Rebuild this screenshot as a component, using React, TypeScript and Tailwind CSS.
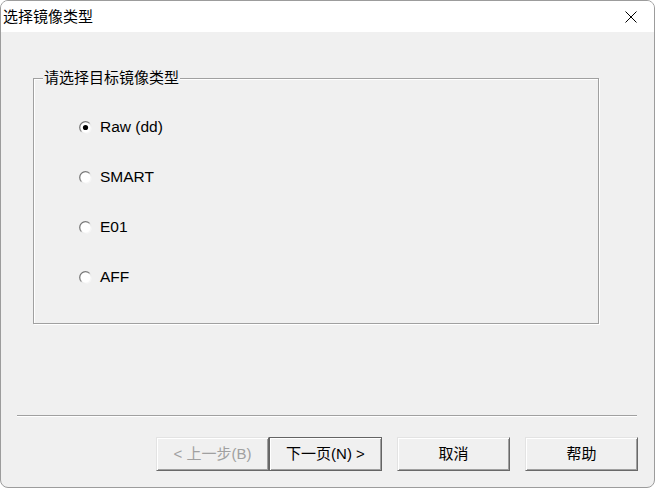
import React from "react";

const FONT = { fontFamily: '"Liberation Sans", "Noto Sans CJK SC", sans-serif' };

function Radio({ checked, id }: { checked?: boolean; id: string }) {
  return (
    <svg width="13" height="13" viewBox="0 0 13 13" className="shrink-0">
      <defs>
        <linearGradient id={id} x1="0" y1="0" x2="1" y2="1">
          <stop offset="0" stopColor="#6a6a6a" />
          <stop offset="0.45" stopColor="#8a8a8a" />
          <stop offset="0.55" stopColor="#e6e6e6" />
          <stop offset="1" stopColor="#ffffff" />
        </linearGradient>
      </defs>
      <circle cx="6.5" cy="6.5" r="5.8" fill="#ffffff" stroke={`url(#${id})`} strokeWidth="1.3" />
      {checked && <circle cx="6.5" cy="6.5" r="2.6" fill="#000000" />}
    </svg>
  );
}

function Btn({
  children,
  variant = "normal",
  className = "",
}: {
  children: React.ReactNode;
  variant?: "normal" | "default" | "disabled";
  className?: string;
}) {
  const base =
    "h-[34px] w-[113px] flex items-center justify-center text-[15px] leading-[20px] bg-[#f0f0f0] shrink-0";
  const v =
    variant === "default"
      ? "border border-[#646464] shadow-[inset_1px_1px_0_#ffffff,inset_-1px_-1px_0_#a0a0a0] text-black"
      : variant === "disabled"
      ? "border border-t-[#e3e3e3] border-l-[#e3e3e3] border-r-[#696969] border-b-[#696969] shadow-[inset_1px_1px_0_#ffffff,inset_-1px_-1px_0_#a0a0a0] text-[#a0a0a0]"
      : "border border-t-[#e3e3e3] border-l-[#e3e3e3] border-r-[#696969] border-b-[#696969] shadow-[inset_1px_1px_0_#ffffff,inset_-1px_-1px_0_#a0a0a0] text-black";
  return <div className={`${base} ${v} ${className}`}>{children}</div>;
}

export default function App() {
  const options = ["Raw (dd)", "SMART", "E01", "AFF"];
  return (
    <div className="w-[655px] h-[488px] bg-white" style={FONT}>
      <div className="w-[655px] h-[488px] rounded-[8px] border border-[#9c9c9c] bg-[#f0f0f0] overflow-hidden flex flex-col">
        {/* title bar */}
        <div className="h-[31px] bg-white flex items-center justify-between shrink-0">
          <span className="ml-[2px] text-[15px] leading-[20px] text-black">选择镜像类型</span>
          <svg width="12" height="12" viewBox="0 0 12 12" className="mr-[17px]">
            <path d="M0.5 0.5 L11.5 11.5 M11.5 0.5 L0.5 11.5" stroke="#000" strokeWidth="1" />
          </svg>
        </div>

        {/* group box */}
        <fieldset className="ml-[32px] mt-[36px] w-[566px] h-[256px] border border-[#a0a0a0] shadow-[inset_1px_1px_0_#ffffff,1px_1px_0_#ffffff] shrink-0">
          <legend className="ml-[9px] px-[1px] text-[15px] leading-[20px] text-black bg-[#f0f0f0]">
            请选择目标镜像类型
          </legend>
          <div className="pl-[45px] pt-[29px] flex flex-col gap-[30px]">
            {options.map((o, i) => (
              <div key={o} className="h-[20px] flex items-center gap-[8px]">
                <Radio checked={i === 0} id={`rg${i}`} />
                <span className="text-[15.5px] leading-[20px] text-black">{o}</span>
              </div>
            ))}
          </div>
        </fieldset>

        {/* separator */}
        <div className="ml-[16px] mt-[91px] w-[620px] h-[2px] border-t border-t-[#a0a0a0] border-b border-b-white shrink-0" />

        {/* buttons */}
        <div className="mt-[20px] flex items-center">
          <Btn variant="disabled" className="ml-[155px] w-[112px]">
            &lt; 上一步(B)
          </Btn>
          <Btn variant="default">下一页(N) &gt;</Btn>
          <Btn className="ml-[15px]">取消</Btn>
          <Btn className="ml-[15px]">帮助</Btn>
        </div>
      </div>
    </div>
  );
}
